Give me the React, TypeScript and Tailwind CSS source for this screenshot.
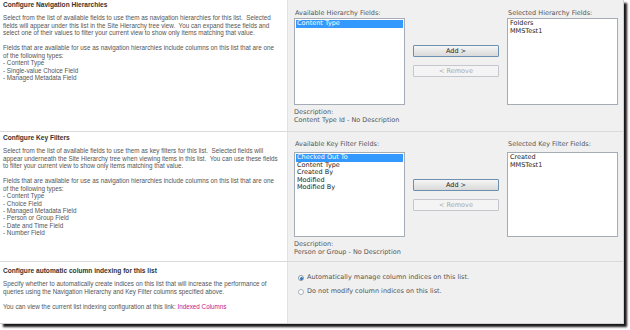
import React from 'react';

const sans = { fontFamily: '"Liberation Sans", Arial, sans-serif' };
const verdana = { fontFamily: '"DejaVu Sans", Verdana, sans-serif' };

type ListProps = { items: string[]; selected?: number };

const ListBox: React.FC<ListProps> = ({ items, selected }) => (
  <div className="w-[111px] h-full bg-white border border-[#a5acb5] p-[1px]">
    {items.map((item, i) => (
      <div
        key={item}
        className={
          i === selected
            ? 'h-[7.6px] leading-[7.6px] px-[1px] bg-[#3399ff] text-white whitespace-nowrap'
            : 'h-[7.6px] leading-[7.6px] px-[1px] text-[#222] whitespace-nowrap'
        }
      >
        {item}
      </div>
    ))}
  </div>
);

const Buttons: React.FC = () => (
  <div className="w-[102px] flex flex-col gap-[8px] px-[8px] pt-[27px]">
    <div className="h-[12px] rounded-[1px] border border-[#6d8fb0] bg-gradient-to-b from-[#f6f6f6] to-[#d9d9d9] text-center leading-[10px] text-[#222]">
      Add &gt;
    </div>
    <div className="h-[12px] rounded-[1px] border border-[#c4c8cc] bg-[#f4f4f4] text-center leading-[10px] text-[#a8a8a8]">
      &lt; Remove
    </div>
  </div>
);

type PickerProps = {
  available: string;
  chosen: string;
  left: string[];
  right: string[];
  description: string;
  padTop: string;
  labelGap: string;
  boxHeight: string;
};

const Picker: React.FC<PickerProps> = ({ available, chosen, left, right, description, padTop, labelGap, boxHeight }) => (
  <div className={`flex-1 bg-[#f0f0f0] border-l border-[#e2e2e2] pl-[6px] text-[6.5px] text-[#555] ${padTop}`} style={verdana}>
    <div className={`flex h-[8px] leading-[8px] ${labelGap}`}>
      <div className="w-[213px] pl-[1px]">{available}</div>
      <div className="pl-[1px]">{chosen}</div>
    </div>
    <div className={`flex ${boxHeight}`}>
      <ListBox items={left} selected={0} />
      <Buttons />
      <ListBox items={right} />
    </div>
    <div className="mt-[3px] leading-[8px]">
      Description:
      <br />
      {description}
    </div>
  </div>
);

const Help: React.FC<{ title: string; lines: string[]; pad: string; children?: React.ReactNode }> = ({ title, lines, pad, children }) => (
  <div className={`w-[287px] shrink-0 pl-[3px] text-[6.3px] leading-[7.45px] text-[#555] ${pad}`} style={sans}>
    <div className="font-bold text-[6.6px] text-[#333] mb-[6px]">{title}</div>
    {lines.map((l, i) => (
      <div key={i} className="h-[7.45px] whitespace-pre">
        {l}
      </div>
    ))}
    {children}
  </div>
);

const App: React.FC = () => {
  return (
    <div className="w-[630px] h-[330px] bg-white overflow-hidden">
      <div className="w-[624px] h-[324px] flex flex-col bg-white border-r border-b border-[#d0d0d0] shadow-[3px_3px_2px_rgba(0,0,0,0.9)]">
        <section className="h-[131px] flex">
          <Help
            title="Configure Navigation Hierarchies"
            pad="pt-[1px]"
            lines={[
              'Select from the list of available fields to use them as navigation hierarchies for this list.  Selected',
              'fields will appear under this list in the Site Hierarchy tree view.  You can expand these fields and',
              'select one of their values to filter your current view to show only items matching that value.',
              '',
              'Fields that are available for use as navigation hierarchies include columns on this list that are one',
              'of the following types:',
              '- Content Type',
              '- Single-value Choice Field',
              '- Managed Metadata Field',
            ]}
          />
          <Picker
            available="Available Hierarchy Fields:"
            chosen="Selected Hierarchy Fields:"
            left={['Content Type']}
            right={['Folders', 'MMSTest1']}
            description="Content Type Id - No Description"
            padTop="pt-[9px]"
            labelGap="mb-[1px]"
            boxHeight="h-[87px]"
          />
        </section>

        <section className="h-[130px] flex border-t border-[#dadada]">
          <Help
            title="Configure Key Filters"
            pad="pt-[2px]"
            lines={[
              'Select from the list of available fields to use them as key filters for this list.  Selected fields will',
              'appear underneath the Site Hierarchy tree when viewing items in this list.  You can use these fields',
              'to filter your current view to show only items matching that value.',
              '',
              'Fields that are available for use as navigation hierarchies include columns on this list that are one',
              'of the following types:',
              '- Content Type',
              '- Choice Field',
              '- Managed Metadata Field',
              '- Person or Group Field',
              '- Date and Time Field',
              '- Number Field',
            ]}
          />
          <Picker
            available="Available Key Filter Fields:"
            chosen="Selected Key Filter Fields:"
            left={['Checked Out To', 'Content Type', 'Created By', 'Modified', 'Modified By']}
            right={['Created', 'MMSTest1']}
            description="Person or Group - No Description"
            padTop="pt-[8px]"
            labelGap="mb-[4px]"
            boxHeight="h-[85px]"
          />
        </section>

        <section className="flex-1 flex border-t border-[#dadada]">
          <Help
            title="Configure automatic column indexing for this list"
            pad="pt-[5px]"
            lines={[
              'Specify whether to automatically create indices on this list that will increase the performance of',
              'queries using the Navigation Hierarchy and Key Filter columns specified above.',
              '',
            ]}
          >
            <div className="whitespace-nowrap">
              You can view the current list indexing configuration at this link:{' '}
              <span className="text-[#c8177f]">Indexed Columns</span>
            </div>
          </Help>
          <div className="flex-1 bg-[#f0f0f0] border-l border-[#e2e2e2] pl-[10px] pt-[12px] text-[6.5px] text-[#555] flex flex-col gap-[6px]" style={verdana}>
            <div className="flex items-center gap-[3px] h-[8px]">
              <span className="w-[6px] h-[6px] rounded-full border border-[#8a96a3] bg-white flex items-center justify-center">
                <span className="w-[3px] h-[3px] rounded-full bg-[#2a6fb8]" />
              </span>
              Automatically manage column indices on this list.
            </div>
            <div className="flex items-center gap-[3px] h-[8px]">
              <span className="w-[6px] h-[6px] rounded-full border border-[#a8b0b8] bg-white" />
              Do not modify column indices on this list.
            </div>
          </div>
        </section>
      </div>
    </div>
  );
};

export default App;
